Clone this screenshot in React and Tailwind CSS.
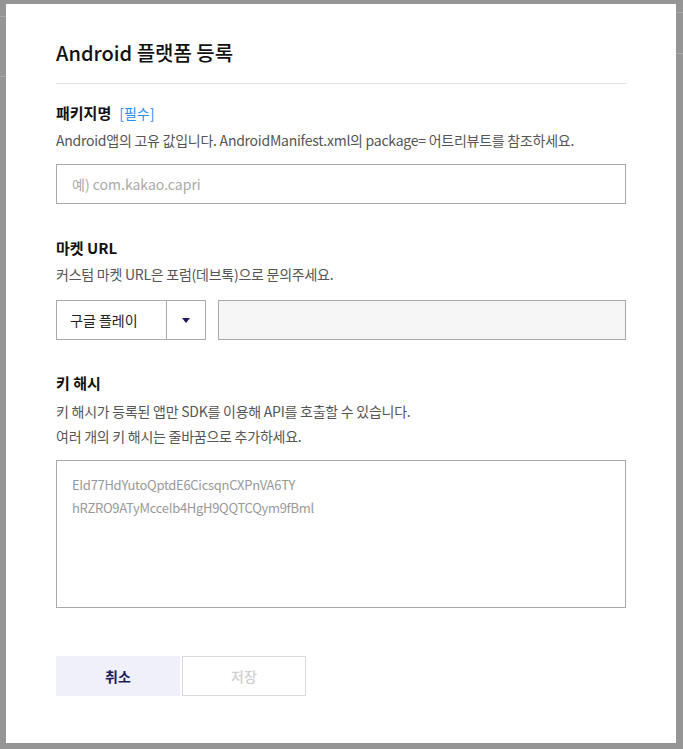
import React from "react";

const font = { fontFamily: '"Noto Sans CJK KR", "Noto Sans", sans-serif' };

const App = () => {
  return (
    <div
      className="relative h-[749px] w-[683px] overflow-hidden bg-[#959595] pt-[4px] pl-[6px]"
      style={font}
    >
      <div className="absolute left-0 top-[16px] h-px w-[6px] bg-[#a9a9a9]" />
      <div className="absolute left-0 top-[76px] h-px w-[6px] bg-[#a9a9a9]" />
      <div className="absolute right-0 top-[12px] h-px w-[7px] bg-[#a9a9a9]" />
      <div className="absolute right-0 top-[53px] h-px w-[7px] bg-[#a9a9a9]" />

      <div className="h-[739px] w-[670px] bg-white px-[50px] pt-[34px]">
        <h1 className="text-[20px] font-medium leading-[30px] text-[#111]">
          Android 플랫폼 등록
        </h1>
        <div className="mt-[15px] h-px w-full bg-[#e2e2e2]" />

        {/* 패키지명 */}
        <div className="mt-[18px] flex items-center gap-[8px]">
          <h2 className="text-[15px] font-bold leading-[22px] text-[#111]">
            패키지명
          </h2>
          <span className="text-[14px] leading-[22px] text-[#2a8ef3]">[필수]</span>
        </div>
        <p className="mt-[6px] text-[14px] leading-[20px] tracking-[-0.25px] text-[#555]">
          Android앱의 고유 값입니다. AndroidManifest.xml의 package= 어트리뷰트를 참조하세요.
        </p>
        <input
          className="mt-[14px] block h-[40px] w-full border border-[#aaa] px-[15px] text-[14px] text-[#333] outline-none placeholder:text-[#aaa]"
          placeholder="예) com.kakao.capri"
          style={font}
        />

        {/* 마켓 URL */}
        <h2 className="mt-[33px] text-[15px] font-bold leading-[22px] text-[#111]">
          마켓 URL
        </h2>
        <p className="mt-[5px] text-[14px] leading-[20px] tracking-[-0.25px] text-[#555]">
          커스텀 마켓 URL은 포럼(데브톡)으로 문의주세요.
        </p>
        <div className="mt-[16px] flex gap-[12px]">
          <div className="flex h-[40px] w-[150px] border border-[#aaa]">
            <div className="flex flex-1 items-center px-[13px] text-[14px] text-[#222]">
              구글 플레이
            </div>
            <div className="flex w-[39px] items-center justify-center border-l border-[#aaa]">
              <svg width="8" height="5" viewBox="0 0 8 5">
                <path d="M0 0 H8 L4 5 Z" fill="#1d1d5b" />
              </svg>
            </div>
          </div>
          <div className="h-[40px] flex-1 border border-[#aaa] bg-[#f5f6f5]" />
        </div>

        {/* 키 해시 */}
        <h2 className="mt-[32px] text-[15px] font-bold leading-[22px] text-[#111]">
          키 해시
        </h2>
        <p className="mt-[5px] text-[14px] leading-[25px] tracking-[-0.25px] text-[#555]">
          키 해시가 등록된 앱만 SDK를 이용해 API를 호출할 수 있습니다.
          <br />
          여러 개의 키 해시는 줄바꿈으로 추가하세요.
        </p>
        <div className="mt-[11px] h-[148px] w-full border border-[#aaa] px-[15px] pt-[12px] text-[13px] leading-[23px] tracking-[-0.3px] text-[#999]">
          <div>EId77HdYutoQptdE6CicsqnCXPnVA6TY</div>
          <div>hRZRO9ATyMcceIb4HgH9QQTCQym9fBml</div>
        </div>

        {/* buttons */}
        <div className="mt-[48px] flex gap-[2px]">
          <button className="h-[40px] w-[124px] bg-[#f0f0fa] text-[14px] font-bold text-[#1d1d5b]">
            취소
          </button>
          <button className="h-[40px] w-[124px] border border-[#dadada] bg-white text-[14px] font-medium text-[#cfcfcf]">
            저장
          </button>
        </div>
      </div>
    </div>
  );
};

export default App;
